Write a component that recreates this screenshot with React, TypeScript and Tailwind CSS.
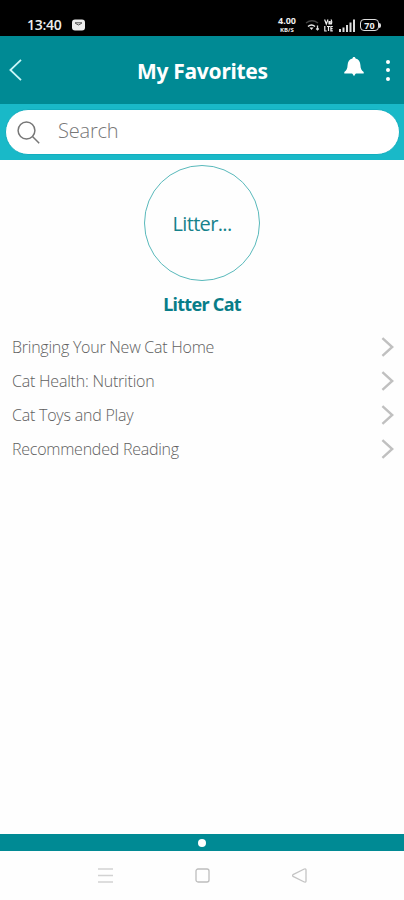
const topics = [
  { label: 'Bringing Your New Cat Home', fit: 'tracking-[-0.25px]' },
  { label: 'Cat Health: Nutrition', fit: 'tracking-[-0.22px]' },
  { label: 'Cat Toys and Play', fit: 'tracking-[-0.22px]' },
  { label: 'Recommended Reading', fit: 'tracking-[-0.24px]' },
];

function StatusBar() {
  return (
    <div className="flex h-9 items-center bg-black pt-[14px] text-[#eeeeee]">
      <span className="ml-[27px] w-[36px] whitespace-nowrap text-[14px] font-semibold leading-[20px] tracking-[-0.3px]">13:40</span>
      <svg className="ml-[9px]" width="13" height="12" viewBox="0 0 13 12" aria-hidden="true">
        <rect x="0" y="0.5" width="13" height="11" rx="3" fill="#eeeeee" />
        <path d="M3 3.8h7M3.2 4.2 6.5 6l3.3-1.8" fill="none" stroke="#555555" strokeWidth="1" />
      </svg>
      <div className="ml-[192px] flex w-[20px] flex-col items-center whitespace-nowrap font-bold">
        <div className="h-[8px] text-[9px] leading-[7px]">4.00</div>
        <div className="mt-px h-[7px] text-[6px] leading-[9px]">KB/S</div>
      </div>
      <svg className="ml-[8px]" width="15" height="14" viewBox="0 0 15 14" fill="none" aria-hidden="true">
        <path d="M1 5Q7 .5 13 5" stroke="#444444" strokeWidth="1.3" />
        <path d="M3 8.5q3.5-3 7 0" stroke="#eeeeee" strokeWidth="1.5" />
        <path d="M4.5 9.5h4l-2 2.5Z" fill="#eeeeee" />
        <path d="M12.5 7.5v4m-1.3-1 1.3 1.3 1.3-1.3" stroke="#dddddd" strokeWidth="1.3" />
      </svg>
      <svg className="ml-[4px]" width="9" height="13" viewBox="0 0 9 13" fill="none" stroke="#eeeeee" strokeWidth="1.2" aria-hidden="true">
        <path d="M.6.5 2.3 5 4 .5M5 2.5h1.2V5H5ZM7 .5q1.5 2.5 0 5M.8 7v5h2M3 7.5h3M4.5 7.5V12M8.8 7.5H6.9v4.4h1.9M7 9.7h1.6" />
      </svg>
      <svg className="ml-[6px]" width="17" height="13" viewBox="0 0 17 13" fill="#dddddd" aria-hidden="true">
        <rect x="0" y="10" width="2" height="3" />
        <rect x="3.5" y="8.5" width="2" height="4.5" />
        <rect x="7" y="6" width="2" height="7" />
        <rect x="10.5" y="3.5" width="2" height="9.5" />
        <rect x="14" y="0.5" width="2" height="12.5" />
      </svg>
      <div className="ml-[4px] flex h-[12px] w-[19px] items-center justify-center rounded-[4px] border-[1.5px] border-[#dddddd] text-[9px] font-bold leading-none">70</div>
      <div className="h-[5px] w-[2px] rounded-r-sm bg-[#dddddd]" />
    </div>
  );
}

export default function App() {
  return (
    <div className="flex h-[900px] w-[404px] flex-col overflow-hidden bg-[#fefefe] font-['Open_Sans','Noto_Sans',sans-serif]">
      <StatusBar />
      <header className="flex h-[68px] items-center bg-[#008a94] text-white">
        <button className="ml-[9px] h-[22px] w-[13px]" aria-label="Back">
          <svg width="13" height="22" viewBox="0 0 13 22" fill="none" stroke="#c8f6f7" strokeWidth="1.8">
            <path d="M12 .8 1.4 11 12 21.2" />
          </svg>
        </button>
        <h1 className="ml-[115px] mt-px w-[134px] whitespace-nowrap font-['Noto_Sans',sans-serif] text-[21px] font-bold leading-[28px] tracking-[-0.3px]">My Favorites</h1>
        <button className="mb-[6px] ml-[73px] h-[20px] w-[20px]" aria-label="Notifications">
          <svg width="20" height="20" viewBox="0 0 20 20" fill="#ffffff">
            <path d="M10 0c-.9 0-1.5.7-1.5 1.5C5.3 2.2 3.8 4.7 3.6 8 3.4 11.6 2.6 13.4.3 15v1.6h19.4V15c-2.3-1.6-3.1-3.4-3.3-7-.2-3.3-1.7-5.8-4.9-6.5C11.5.7 10.9 0 10 0Z" />
            <path d="M8 16h4l-2 3.2Z" />
          </svg>
        </button>
        <button className="ml-[22px] flex h-[21px] w-[4px] flex-col justify-between" aria-label="More options">
          <span className="h-[4px] w-[4px] rounded-full bg-white" />
          <span className="h-[4px] w-[4px] rounded-full bg-white" />
          <span className="h-[4px] w-[4px] rounded-full bg-white" />
        </button>
      </header>
      <div className="h-[56px] bg-[#19b9c8] pl-[5px] pr-[4px] pt-[5px]">
        <div className="flex h-[46px] items-center rounded-full border border-[#12aebf] bg-white pl-[11px] text-[#777777]">
          <svg width="23" height="23" viewBox="0 0 23 23" fill="none" stroke="#777777" strokeWidth="1.5" aria-hidden="true">
            <circle cx="9.5" cy="9.5" r="8.4" />
            <path d="m15.5 15.5 6.7 6.7" />
          </svg>
          <span className="ml-[18px] pb-[3px] text-[20px] font-light leading-[28px] tracking-[-0.2px]">Search</span>
        </div>
      </div>
      <main className="flex-1">
        <div className="mx-auto mt-[5px] flex h-[116px] w-[116px] items-center justify-center rounded-full border-[1.5px] border-[#59b9bb] pt-[2px] text-[20px] tracking-[-0.65px] text-[#16828b]">Litter...</div>
        <h2 className="mt-[10px] text-center font-['Noto_Sans',sans-serif] text-[18px] font-bold leading-[26px] tracking-[-0.7px] text-[#087d88]">Litter Cat</h2>
        <ul className="mt-[13px]">
          {topics.map(({ label, fit }) => (
            <li key={label} className="flex h-[34px] items-center justify-between pl-[12px] pr-[10px]">
              <span className={`whitespace-nowrap text-[16px] font-light leading-[22px] text-[#606060] ${fit}`}>{label}</span>
              <svg width="13" height="20" viewBox="0 0 13 20" fill="none" stroke="#c0c0c0" strokeWidth="2.4" aria-hidden="true">
                <path d="m1.4 1.2 9.8 8.8-9.8 8.8" />
              </svg>
            </li>
          ))}
        </ul>
      </main>
      <div className="flex h-[17px] items-center justify-center bg-[#008a94]">
        <span className="h-[8px] w-[8px] rounded-full bg-white" />
      </div>
      <nav className="flex h-[49px] items-center justify-center gap-[82px] pl-[1px] text-[#bdbdbd]">
        <svg width="15" height="15" viewBox="0 0 15 15" stroke="#d2d2d2" strokeWidth="1.5" aria-hidden="true">
          <path d="M0 1h15M0 7.5h15M0 14h15" />
        </svg>
        <svg width="15" height="15" viewBox="0 0 15 15" fill="none" stroke="#bdbdbd" strokeWidth="1.3" aria-hidden="true">
          <rect x="1" y="1" width="13" height="13" rx="2" />
        </svg>
        <svg width="15" height="15" viewBox="0 0 15 15" fill="none" stroke="#c4c4c4" strokeWidth="1.3" strokeLinejoin="round" aria-hidden="true">
          <path d="M1 6.6Q.2 7.5 1 8.4L12.3 14Q14 14.5 14 13V2Q14 .5 12.3 1Z" />
        </svg>
      </nav>
    </div>
  );
}
